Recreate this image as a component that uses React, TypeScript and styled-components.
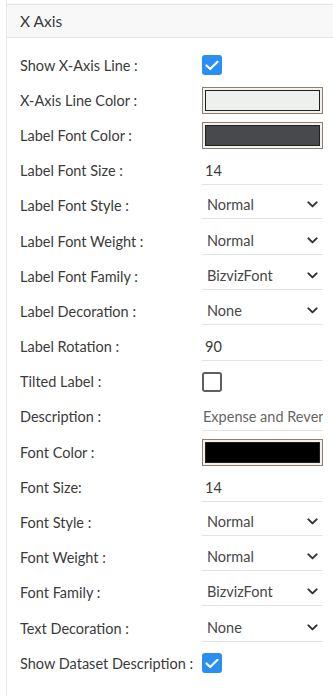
import React from 'react';
import styled, { createGlobalStyle } from 'styled-components';

const GlobalStyle = createGlobalStyle`
  html, body {
    margin: 0;
    padding: 0;
    background: #ffffff;
  }
  body {
    font-family: Lato, 'Noto Sans', sans-serif;
    color: #3b3b3b;
  }
`;

const Panel = styled.div`
  width: 327px;
  height: 696px;
  margin-left: 6px;
  padding-top: 4px;
  box-sizing: border-box;
  border-left: 1px solid #e4e9ed;
`;

const Header = styled.div`
  height: 32px;
  display: flex;
  align-items: center;
  padding-left: 13px;
  background: #f8f8f8;
  border-top: 1px solid #dde3e8;
  border-bottom: 1px solid #e2e6e9;
  font-size: 15.5px;
  color: #3a3a3a;
`;

const Body = styled.div`
  padding: 9.5px 0 0 13px;
`;

const Row = styled.div`
  height: 35.2px;
  display: grid;
  grid-template-columns: 182px 121px;
  align-items: center;
`;

const Label = styled.div`
  font-size: 14.5px;
  color: #3b3b3b;
  white-space: nowrap;
`;

const Checkbox = styled.div<{ checked: boolean }>`
  width: 20px;
  height: 20px;
  box-sizing: border-box;
  border-radius: 3px;
  display: flex;
  align-items: center;
  justify-content: center;
  background: ${(p: { checked: boolean }) => (p.checked ? '#2b8ef3' : '#ffffff')};
  border: ${(p: { checked: boolean }) => (p.checked ? 'none' : '2px solid #5f5f5f')};
`;

const ColorBox = styled.div`
  height: 27px;
  box-sizing: border-box;
  border: 1px solid #8c7f72;
  background: #f4f2ef;
  padding: 2px;
`;

const Swatch = styled.div<{ color: string }>`
  height: 100%;
  box-sizing: border-box;
  border: 1px solid #1f1f1f;
  background: ${(p: { color: string }) => p.color};
`;

const TextInput = styled.input<{ muted?: boolean }>`
  width: 100%;
  height: 28px;
  margin: 1px 0 0 0;
  box-sizing: border-box;
  border: none;
  border-bottom: 1px solid #e3e3e3;
  outline: none;
  background: transparent;
  padding: 0 0 0 ${(p: { muted?: boolean }) => (p.muted ? '1px' : '3px')};
  font-family: inherit;
  font-size: 14.5px;
  color: ${(p: { muted?: boolean }) => (p.muted ? '#666666' : '#3b3b3b')};
`;

const SelectField = styled.div`
  height: 27px;
  box-sizing: border-box;
  border-bottom: 1px solid #e3e3e3;
  display: flex;
  align-items: center;
  justify-content: space-between;
  padding: 0 5px 1px 5px;
  font-size: 14.5px;
  color: #474747;
`;

const Check = () => (
  <svg width="14" height="11" viewBox="0 0 14 11">
    <polyline points="1.5,5.5 5.2,9 12.5,1.8" fill="none" stroke="#ffffff" strokeWidth="2.2" strokeLinecap="round" strokeLinejoin="round" />
  </svg>
);

const Chevron = () => (
  <svg width="11" height="7" viewBox="0 0 11 7">
    <polyline points="1.4,1.4 5.5,5.4 9.6,1.4" fill="none" stroke="#333333" strokeWidth="2" strokeLinecap="round" strokeLinejoin="round" />
  </svg>
);

type Field =
  | { kind: 'check'; label: string; checked: boolean }
  | { kind: 'color'; label: string; color: string }
  | { kind: 'text'; label: string; value: string; muted?: boolean }
  | { kind: 'select'; label: string; value: string };

const fields: Field[] = [
  { kind: 'check', label: 'Show X-Axis Line :', checked: true },
  { kind: 'color', label: 'X-Axis Line Color :', color: '#eef0ee' },
  { kind: 'color', label: 'Label Font Color :', color: '#48494d' },
  { kind: 'text', label: 'Label Font Size :', value: '14' },
  { kind: 'select', label: 'Label Font Style :', value: 'Normal' },
  { kind: 'select', label: 'Label Font Weight :', value: 'Normal' },
  { kind: 'select', label: 'Label Font Family :', value: 'BizvizFont' },
  { kind: 'select', label: 'Label Decoration :', value: 'None' },
  { kind: 'text', label: 'Label Rotation :', value: '90' },
  { kind: 'check', label: 'Tilted Label :', checked: false },
  { kind: 'text', label: 'Description :', value: 'Expense and Revenue', muted: true },
  { kind: 'color', label: 'Font Color :', color: '#000000' },
  { kind: 'text', label: 'Font Size:', value: '14' },
  { kind: 'select', label: 'Font Style :', value: 'Normal' },
  { kind: 'select', label: 'Font Weight :', value: 'Normal' },
  { kind: 'select', label: 'Font Family :', value: 'BizvizFont' },
  { kind: 'select', label: 'Text Decoration :', value: 'None' },
  { kind: 'check', label: 'Show Dataset Description :', checked: true },
];

const renderControl = (f: Field) => {
  switch (f.kind) {
    case 'check':
      return <Checkbox checked={f.checked}>{f.checked && <Check />}</Checkbox>;
    case 'color':
      return (
        <ColorBox>
          <Swatch color={f.color} />
        </ColorBox>
      );
    case 'text':
      return <TextInput muted={f.muted} value={f.value} readOnly />;
    case 'select':
      return (
        <SelectField>
          <span>{f.value}</span>
          <Chevron />
        </SelectField>
      );
  }
};

export default function App() {
  return (
    <>
      <GlobalStyle />
      <Panel>
        <Header>X Axis</Header>
        <Body>
          {fields.map((f) => (
            <Row key={f.label}>
              <Label>{f.label}</Label>
              {renderControl(f)}
            </Row>
          ))}
        </Body>
      </Panel>
    </>
  );
}
